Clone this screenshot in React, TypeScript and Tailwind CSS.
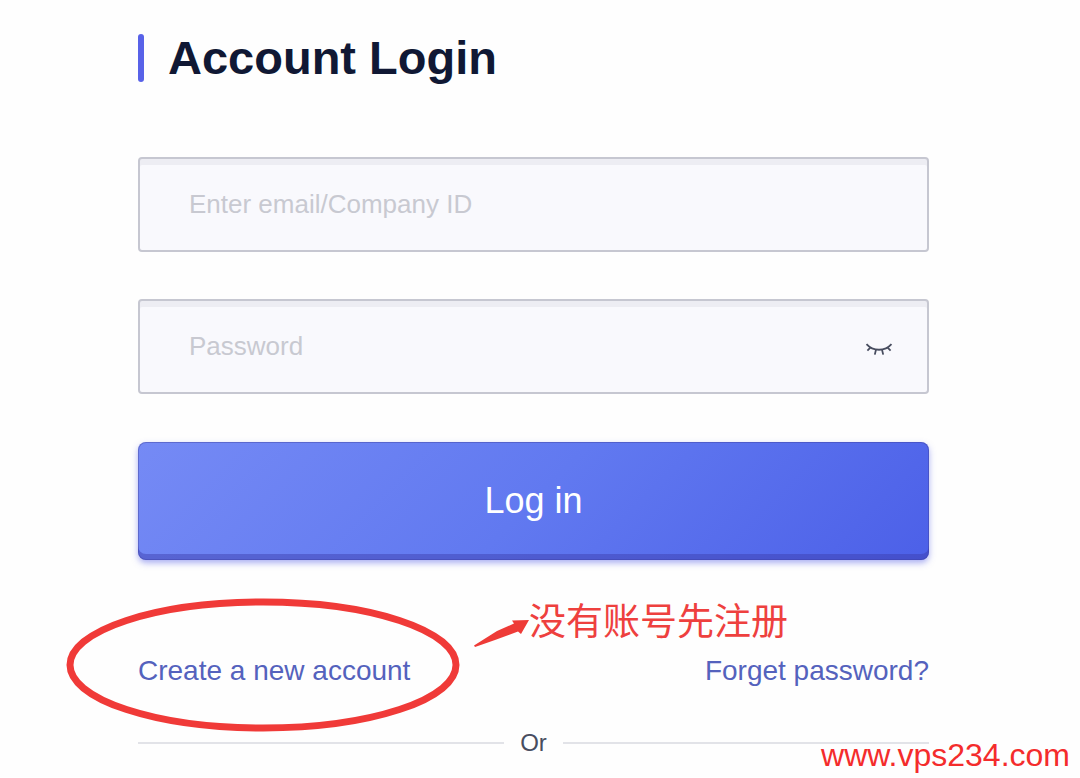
import { useState } from "react";

const fieldClass =
  "block h-[95px] w-full rounded border-2 border-[#c6c7d1] bg-[#f9f9fd] px-[49px] text-[26px] text-[#484d5f] shadow-[inset_0_6px_0_#ededf3] outline-none placeholder:text-[#c8c9d1] placeholder:opacity-100";

function ClosedEye() {
  return (
    <svg
      viewBox="0 0 28 16"
      className="h-4 w-7"
      fill="none"
      stroke="#484d5f"
      strokeWidth="1.8"
      aria-hidden="true"
    >
      <path d="M1.5 3.2C8 10.6 20 10.6 26.5 3.2" />
      <path d="M5.6 6.4L2.4 9.6M11 8.6L9.8 13.6M17 8.6L18.2 13.6M22.4 6.4L25.6 9.6" />
    </svg>
  );
}

export default function App() {
  const [visible, setVisible] = useState(false);

  return (
    <main className="relative bg-[#fefefe] pt-7 pr-[151px] pb-4 pl-[138px] font-['Liberation_Sans',Arial,sans-serif]">
      <header className="flex items-center gap-6">
        <span className="h-12 w-1.5 rounded-full bg-[#5862e8]" />
        <h1 className="text-[47px] leading-[60px] font-bold text-[#101834]">Account Login</h1>
      </header>

      <form className="mt-[69px]" onSubmit={(event) => event.preventDefault()}>
        <input
          type="text"
          aria-label="Enter email/Company ID"
          placeholder="Enter email/Company ID"
          className={fieldClass}
        />
        <div className="relative mt-[47px]">
          <input
            type={visible ? "text" : "password"}
            aria-label="Password"
            placeholder="Password"
            className={fieldClass}
          />
          <button
            type="button"
            aria-label="Show password"
            onClick={() => setVisible(!visible)}
            className="absolute inset-y-0 right-9 flex items-center pt-1"
          >
            <ClosedEye />
          </button>
        </div>
        <button
          type="submit"
          className="mt-12 block h-[118px] w-full rounded-lg bg-linear-[135deg] from-[#758af5] via-[#6179f0] to-[#4c60e8] text-4xl text-white shadow-[inset_0_-6px_0_rgba(60,60,170,0.45),inset_0_0_0_1px_rgba(60,60,150,0.4),0_3px_6px_rgba(88,98,232,0.5)]"
        >
          Log in
        </button>
      </form>

      <div className="relative mt-[93px] flex justify-between text-[28px] leading-9 text-[#5462bd]">
        <a href="#register" className="relative">
          Create a new account
          <svg
            viewBox="0 0 394 134"
            className="pointer-events-none absolute -top-[55px] -left-[72px] h-[134px] w-[394px] max-w-none"
            fill="none"
            aria-hidden="true"
          >
            <ellipse cx="197" cy="67" rx="193" ry="63" stroke="#f03a38" strokeWidth="7" />
          </svg>
        </a>
        <a href="#reset">Forget password?</a>
        <div className="pointer-events-none absolute -top-[54px] left-[335px] flex items-start text-[#ee403e]">
          <svg viewBox="0 0 56 36" className="mt-4 h-9 w-14" fill="#ee3b37" aria-hidden="true">
            <path d="M1 30.5L24 16L41 8.5L39 5.5L56 5L48 19L45 16.5L22 25L2 32Z" />
          </svg>
          <span className="font-['Noto_Sans_CJK_SC',sans-serif] text-[37px] leading-10 whitespace-nowrap">
            没有账号先注册
          </span>
        </div>
      </div>

      <div className="mt-9 flex items-center gap-4">
        <span className="h-0.5 flex-1 bg-[#e2e3e8]" />
        <span className="text-2xl leading-9 text-[#484d5f]">Or</span>
        <span className="h-0.5 flex-1 bg-[#e2e3e8]" />
      </div>

      <p className="absolute right-2.5 bottom-0.5 text-[32px] leading-10 text-[#f42c2c]">
        www.vps234.com
      </p>
    </main>
  );
}
